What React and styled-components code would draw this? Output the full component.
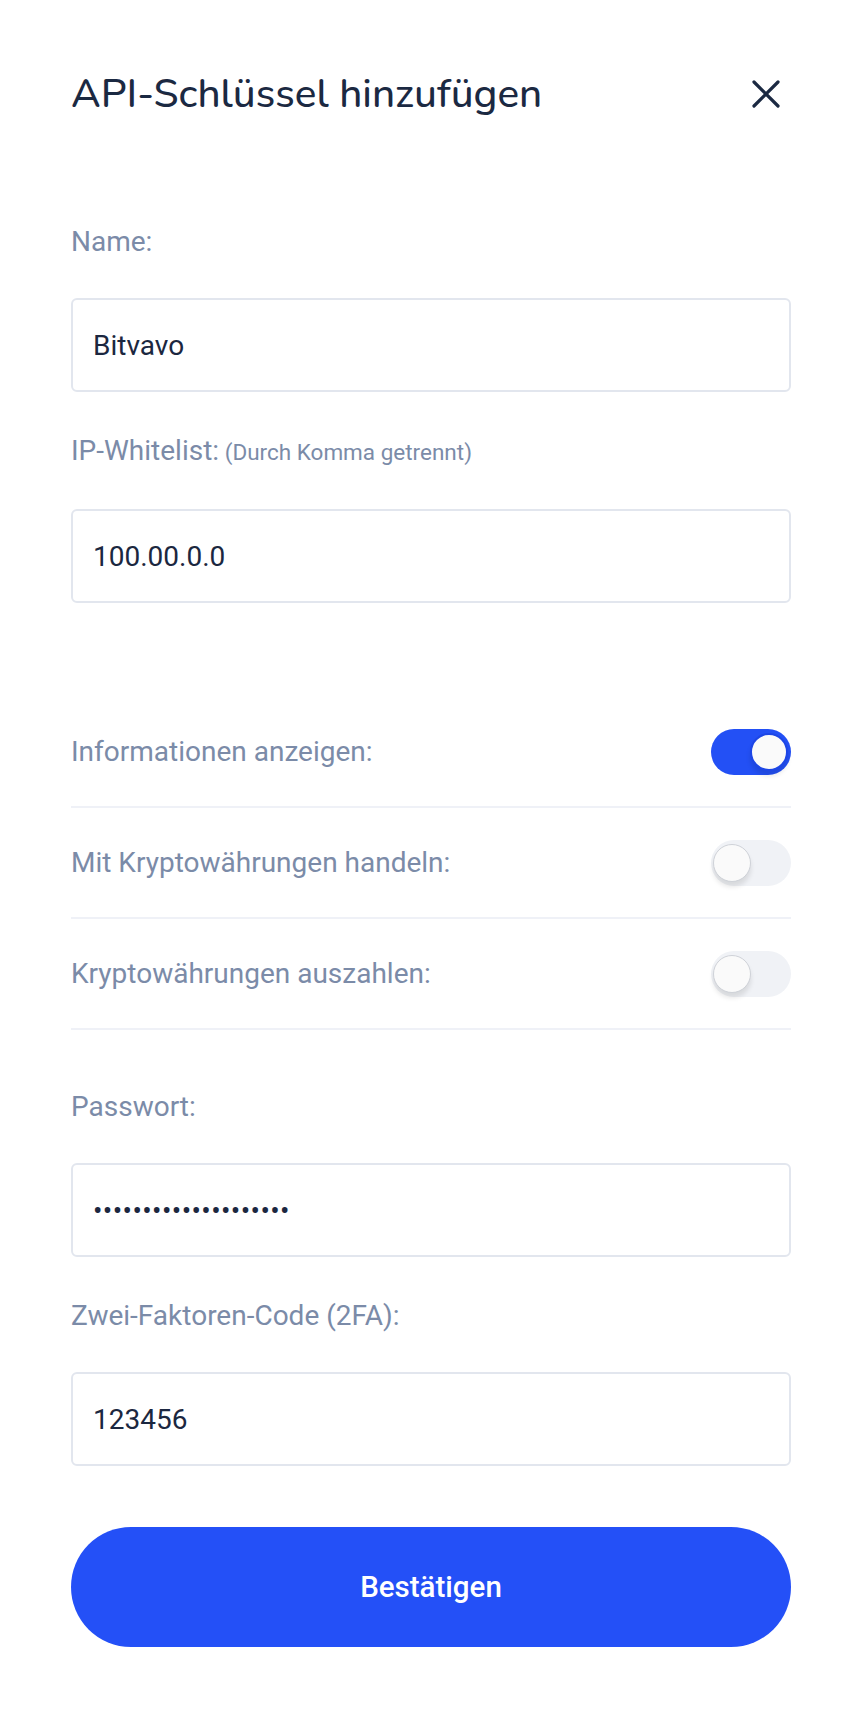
import React, { useState } from "react";
import styled, { createGlobalStyle } from "styled-components";

const GlobalStyle = createGlobalStyle`
  * {
    box-sizing: border-box;
  }

  body {
    margin: 0;
    background: #ffffff;
    font-family: Roboto, "Liberation Sans", sans-serif;
  }
`;

const TOGGLES = [
  { id: "info", label: "Informationen anzeigen:", on: true },
  { id: "trade", label: "Mit Kryptowährungen handeln:", on: false },
  { id: "withdraw", label: "Kryptowährungen auszahlen:", on: false },
];

function Switch({ on, onToggle }) {
  return (
    <Track type="button" role="switch" aria-checked={on} $on={on} onClick={onToggle}>
      <Knob $on={on} />
    </Track>
  );
}

function Field({ label, hint, type = "text", value }) {
  return (
    <FieldBox>
      <Label>
        {label}
        {hint && <Hint> {hint}</Hint>}
      </Label>
      <Input type={type} defaultValue={value} />
    </FieldBox>
  );
}

export default function App() {
  const [toggles, setToggles] = useState(
    TOGGLES.reduce((acc, t) => ({ ...acc, [t.id]: t.on }), {})
  );

  const flip = (id) => setToggles((prev) => ({ ...prev, [id]: !prev[id] }));

  return (
    <>
      <GlobalStyle />
      <Sheet>
        <Header>
          <Title>API-Schlüssel hinzufügen</Title>
          <CloseButton type="button" aria-label="Schließen">
            <svg width="28" height="28" viewBox="0 0 28 28" fill="none">
              <path
                d="M2 2L26 26M26 2L2 26"
                stroke="#1b2942"
                strokeWidth="3.2"
                strokeLinecap="round"
              />
            </svg>
          </CloseButton>
        </Header>

        <Field label="Name:" value="Bitvavo" />
        <Field label="IP-Whitelist:" hint="(Durch Komma getrennt)" value="100.00.0.0" />

        <ToggleList>
          {TOGGLES.map((t) => (
            <ToggleRow key={t.id}>
              <RowLabel>{t.label}</RowLabel>
              <Switch on={toggles[t.id]} onToggle={() => flip(t.id)} />
            </ToggleRow>
          ))}
        </ToggleList>

        <Field label="Passwort:" type="password" value="12345678901234567890" />
        <Field label="Zwei-Faktoren-Code (2FA):" value="123456" />

        <SubmitButton type="button">Bestätigen</SubmitButton>
      </Sheet>
    </>
  );
}

const Sheet = styled.div`
  width: 862px;
  min-height: 1714px;
  padding: 70px 71px 60px 71px;
  display: flex;
  flex-direction: column;
`;

const Header = styled.div`
  display: flex;
  align-items: center;
  justify-content: space-between;
  margin-bottom: 107px;
`;

const Title = styled.h1`
  margin: 0;
  font-family: "Nunito", Lato, "Open Sans", sans-serif;
  font-size: 40.5px;
  line-height: 48px;
  font-weight: 500;
  color: #1b2942;
`;

const CloseButton = styled.button`
  border: none;
  background: none;
  padding: 0;
  margin-right: 11px;
  display: flex;
  cursor: pointer;
`;

const FieldBox = styled.div`
  display: flex;
  flex-direction: column;

  & + & {
    margin-top: 42px;
  }
`;

const Label = styled.label`
  font-size: 28px;
  line-height: 33px;
  color: #7b8ba8;
  margin-bottom: 40px;
`;

const Hint = styled.span`
  font-size: 22.5px;
`;

const Input = styled.input`
  height: 94px;
  width: 100%;
  border: 2px solid #e2e6ee;
  border-radius: 6px;
  padding: 0 20px;
  font-family: Roboto, "Liberation Sans", sans-serif;
  font-size: 28px;
  color: #1b2740;
  background: #ffffff;
  outline: none;

  &[type="password"] {
    letter-spacing: 0.4px;
  }
`;

const ToggleList = styled.div`
  display: flex;
  flex-direction: column;
  margin: 94px 0 60px;
`;

const ToggleRow = styled.div`
  height: 111px;
  display: flex;
  align-items: center;
  justify-content: space-between;
  border-bottom: 2px solid #eff1f7;
`;

const RowLabel = styled.span`
  font-size: 28px;
  line-height: 33px;
  color: #7b8ba8;
`;

const Track = styled.button`
  position: relative;
  width: 80px;
  height: 46px;
  border: none;
  border-radius: 23px;
  padding: 0;
  background: ${(p) => (p.$on ? "#2350f5" : "#f0f2f6")};
  cursor: pointer;
`;

const Knob = styled.span`
  position: absolute;
  top: 4px;
  left: ${(p) => (p.$on ? "39px" : "2px")};
  width: 38px;
  height: 38px;
  border-radius: 50%;
  background: #fafafa;
  border: ${(p) => (p.$on ? "2px solid #1d46e6" : "1px solid #cfd2d8")};
  box-shadow: 0 5px 5px rgba(0, 0, 0, 0.1);
`;

const SubmitButton = styled.button`
  margin-top: 61px;
  height: 120px;
  width: 100%;
  border: none;
  border-radius: 60px;
  background: #2450f7;
  color: #ffffff;
  font-family: Roboto, "Liberation Sans", sans-serif;
  font-size: 29.5px;
  font-weight: 500;
  cursor: pointer;
`;
